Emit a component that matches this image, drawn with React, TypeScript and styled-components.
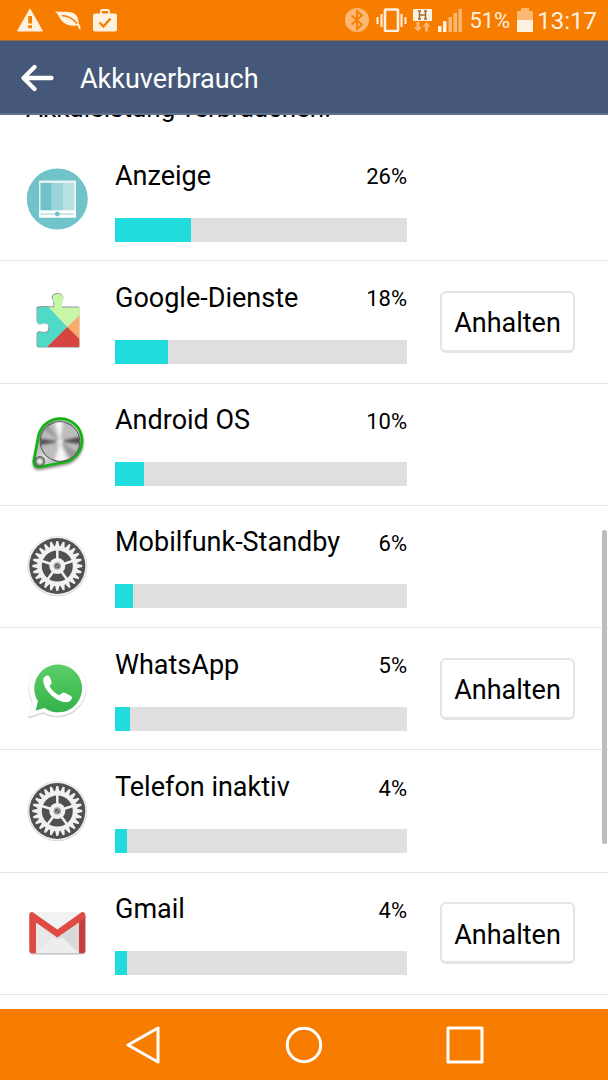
import React from "react";
import styled, { createGlobalStyle } from "styled-components";

const GlobalStyle = createGlobalStyle`
  *, *::before, *::after { box-sizing: border-box; }
  body {
    margin: 0;
    background: #fff;
    color: #000;
    font-family: Roboto, "Liberation Sans", sans-serif;
  }
`;

const Screen = styled.div`
  display: flex;
  flex-direction: column;
  height: 100vh;
`;

const StatusBar = styled.div`
  flex: none;
  display: flex;
  align-items: center;
  justify-content: space-between;
  height: 41px;
  padding: 0 11px 0 17px;
  background: #f77d00;
  border-bottom: 1px solid #9a6c3c;
  color: #fff1e0;
`;

const StatusGroup = styled.div<{ $gap: number }>`
  display: flex;
  align-items: center;
  gap: ${({ $gap }) => $gap}px;
`;

const StatusText = styled.span<{ $size: number }>`
  padding-top: 2px;
  font-size: ${({ $size }) => $size}px;
  line-height: 28px;
`;

const Header = styled.header`
  flex: none;
  display: flex;
  align-items: center;
  gap: 24px;
  height: 74px;
  padding: 2px 20px 0;
  background: #455879;
  border-bottom: 2px solid #5f6f8c;
  color: #fff;
`;

const BackButton = styled.button`
  display: flex;
  padding: 0;
  border: 0;
  background: none;
  color: inherit;
`;

const Title = styled.h1`
  margin: 0;
  padding-top: 2px;
  font-size: 27px;
  line-height: 32px;
  font-weight: 400;
`;

const ListArea = styled.main`
  position: relative;
  flex: 1;
  min-height: 0;
  display: flex;
  flex-direction: column;
  overflow: hidden;
`;

const Intro = styled.p`
  flex: none;
  display: flex;
  align-items: flex-end;
  height: 24px;
  margin: 0;
  padding: 0 26px 15px;
  font-size: 26px;
  line-height: 32px;
`;

const UsageList = styled.ul`
  flex: 1;
  display: flex;
  flex-direction: column;
  margin: 0;
  padding: 0 0 14px;
  list-style: none;
`;

const Row = styled.li`
  flex: 1 0 auto;
  display: flex;
  align-items: center;
  min-height: 122px;
  padding-left: 25px;
  border-bottom: 1px solid #e6e6e6;
`;

const AppIcon = styled.svg`
  flex: none;
  width: 64px;
  height: 64px;
`;

const Usage = styled.div`
  flex: 1;
  margin-left: 26px;
  padding-top: 2px;
`;

const UsageHead = styled.div`
  display: flex;
  align-items: center;
  justify-content: space-between;
  height: 32px;
  margin-bottom: 26px;
  line-height: 32px;
`;

const AppName = styled.span`
  font-size: 27px;
`;

const Percent = styled.span`
  padding-top: 3px;
  font-size: 22px;
`;

const Track = styled.div`
  height: 24px;
  background: #dfdfdf;
`;

const Fill = styled.div`
  height: 100%;
  background: #20dcdc;
`;

const Action = styled.div`
  flex: none;
  width: 201px;
  padding: 0 33px;
`;

const StopButton = styled.button`
  width: 100%;
  height: 62px;
  padding: 4px 0 0;
  border: 2px solid #e2e5e5;
  border-bottom-width: 3px;
  border-radius: 6px;
  background: #fff;
  color: #000;
  font-family: inherit;
  font-size: 27px;
  line-height: 32px;
`;

const ScrollThumb = styled.div`
  position: absolute;
  top: 46.4%;
  right: 1px;
  width: 5px;
  height: 35.1%;
  border-radius: 2px;
  background: #bcbebe;
`;

const NavBar = styled.nav`
  flex: none;
  display: grid;
  grid-template-columns: repeat(3, 1fr);
  height: 71px;
  padding: 0 63px;
  background: #f77d00;
`;

const NavButton = styled.button`
  display: flex;
  align-items: center;
  justify-content: center;
  padding: 0;
  border: 0;
  background: none;
`;

const FAINT = "#fcb873";

const WarningIcon = () => (
  <svg width="26" height="24" viewBox="0 0 26 24" aria-hidden="true">
    <path d="M13 1 25.5 23H.5z" fill="#fff1e0" stroke="#fff1e0" strokeLinejoin="round" />
    <path d="M11.2 8h3.800v7.500h-3.800zM11.2 17.300h3.800v3h-3.800z" fill="#f77d00" />
  </svg>
);

const LeafIcon = () => (
  <svg width="26" height="24" viewBox="0 0 26 24" aria-hidden="true">
    <path
      d="M0 3C5 5 11 2.500 17 4.500 22 6.500 23.800 10.500 23.500 15c1.200 2 1.800 3.500 2.200 6.500L24 21c-.5-1.800-1-2.600-2-3.800C17 18.500 12 17.500 8 14 4 10.500 4 7 0 3z"
      fill="#fff1e0"
    />
    <path d="M7 7.500C13 8 18 10.500 22 15.500" fill="none" stroke="#f77d00" strokeWidth="1.300" />
  </svg>
);

const BriefcaseIcon = () => (
  <svg width="24" height="24" viewBox="0 0 24 24" aria-hidden="true">
    <path d="M8 7V3.500Q8 2 9.500 2h5Q16 2 16 3.500V7" fill="none" stroke="#fff1e0" strokeWidth="2" />
    <rect y="5.500" width="24" height="18" rx="2" fill="#fff1e0" />
    <path d="m6.500 14.500 4 4 7-8" fill="none" stroke="#f77d00" strokeWidth="2.300" />
  </svg>
);

const BluetoothIcon = () => (
  <svg width="24" height="24" viewBox="0 0 24 24" aria-hidden="true">
    <circle cx="12" cy="12" r="12" fill={FAINT} />
    <path d="m6.500 7.500 10.500 9L12 21V3l5 4.500-10.500 9" fill="none" stroke="#f77d00" strokeWidth="1.800" />
  </svg>
);

const VibrateIcon = () => (
  <svg width="31" height="24" viewBox="0 0 31 24" aria-hidden="true">
    <g fill="none" stroke="#fff1e0">
      <rect x="9" y="1.500" width="13" height="21.500" rx="1" strokeWidth="2.600" />
      <path d="M5.500 6v13M25.500 6v13M1.500 9v7M29.500 9v7" strokeWidth="2" />
    </g>
  </svg>
);

const DataIcon = () => (
  <svg width="19" height="24" viewBox="0 0 19 24" aria-hidden="true">
    <rect y="1" width="19" height="12" rx="1" fill="#fff1e0" />
    <path d="M6.500 3v8M12.500 3v8M6.500 7h6M5 3h3M11 3h3M5 11h3M11 11h3" stroke="#9b6a3a" strokeWidth="1.500" />
    <path d="M3.500 14h3v5H9l-4 4.500L1 19h2.500zM12 23.500h3v-5h2.500l-4-4.500-4 4.500H12z" fill={FAINT} />
  </svg>
);

const SignalIcon = () => (
  <svg width="24" height="24" viewBox="0 0 24 24" aria-hidden="true">
    <path d="M0 18h3.500v6H0zM5 13h3.500v11H5z" fill="#fff1e0" />
    <path d="M10.500 9H14v15h-3.500zM15.500 5H19v19h-3.500zM20.500 1H24v23h-3.500z" fill={FAINT} />
  </svg>
);

const BatteryIcon = () => (
  <svg width="16" height="24" viewBox="0 0 16 24" aria-hidden="true">
    <path d="M4 0h8v3h4v9H0V3h4z" fill={FAINT} />
    <rect y="12" width="16" height="12" fill="#fff1e0" />
  </svg>
);

const ArrowIcon = () => (
  <svg width="36" height="28" viewBox="0 0 36 28" aria-hidden="true">
    <path
      d="M14.500 3 3.500 14l11 11M4 14h27.500"
      fill="none"
      stroke="currentColor"
      strokeWidth="4.300"
      strokeLinecap="round"
      strokeLinejoin="round"
    />
  </svg>
);

const DisplayIcon = () => (
  <AppIcon viewBox="0 0 64 64" aria-hidden="true">
    <circle cx="32.300" cy="31" r="30.500" fill="#6fc3c9" />
    <rect x="14" y="12.500" width="37" height="37" fill="#e6f1f3" />
    <rect x="15.500" y="15" width="11.300" height="27.500" fill="#6fc3c9" />
    <rect x="26.800" y="15" width="11.200" height="27.500" fill="#99d4d8" />
    <rect x="38" y="15" width="11" height="27.500" fill="#b9e1e4" />
    <rect x="14" y="42.500" width="37" height="7" fill="#fff" />
    <path d="M15.500 46H49" stroke="#b9e1e4" strokeWidth="1.300" />
    <circle cx="32.300" cy="46" r="2.400" fill="#6fc3c9" />
  </AppIcon>
);

const PUZZLE =
  "M12.500 17.500Q20 16.500 29.300 17.500V11.500Q27.500 10 27.700 7 28.500 4 33 4T38.300 7Q38.500 10 37 11.500V17.500H54.300V57H12.500V43.500Q14 41.500 16 42.500 24.300 44.500 24.300 38T16 33.500Q14 34.500 12.500 32.500z";

const PuzzleIcon = () => (
  <AppIcon viewBox="0 0 64 64" aria-hidden="true">
    <defs>
      <clipPath id="puzzle">
        <path d={PUZZLE} />
      </clipPath>
    </defs>
    <path d={PUZZLE} fill="#8b9996" stroke="#8b9996" strokeWidth="1" transform="translate(-.5 -.5)" />
    <path d={PUZZLE} fill="#c4cbc9" transform="translate(0 1)" />
    <g clipPath="url(#puzzle)">
      <path d="M0 0h24v17.500L42.300 37 22 58H0z" fill="#4fdac8" />
      <path d="M24 0v17.500L42.300 37 55 25V0z" fill="#c8f6a9" />
      <path d="M42.300 37 55 25v25z" fill="#fcaa6a" />
      <path d="M42.300 37 55 49.500V58H21z" fill="#d6453f" />
    </g>
  </AppIcon>
);

const KnobIcon = () => (
  <AppIcon viewBox="0 0 64 64" aria-hidden="true">
    <defs>
      <linearGradient id="plate" x1="0" y1="0" x2="1" y2="1">
        <stop offset="0" stopColor="#666" />
        <stop offset=".5" stopColor="#ddd" />
        <stop offset="1" stopColor="#888" />
      </linearGradient>
      <radialGradient id="stud">
        <stop offset="0" stopColor="#fff" />
        <stop offset=".45" stopColor="#c8c8c8" />
        <stop offset="1" stopColor="#4a4a4a" />
      </radialGradient>
      <clipPath id="disc">
        <circle cx="35" cy="29.500" r="19.300" />
      </clipPath>
      <filter id="soft" x="-20%" y="-20%" width="140%" height="140%">
        <feGaussianBlur stdDeviation="1.600" />
      </filter>
    </defs>
    <path
      d="M8 50 13 23A23 23 0 1 1 40.500 51L14.500 56Q8 56.500 8 50z"
      fill="#333"
      opacity=".6"
      filter="url(#soft)"
      transform="translate(0 2)"
    />
    <path
      d="M8.800 49 13.500 24A22 22 0 1 1 40 50L15 54.800Q8.500 55.500 8.800 49z"
      fill="url(#plate)"
      stroke="#12b512"
      strokeWidth="2.800"
    />
    <circle cx="35" cy="29.500" r="20.300" fill="#555" />
    <g clipPath="url(#disc)">
      <rect x="14" y="9" width="42" height="42" fill="#bdbdbd" />
      <g filter="url(#soft)">
        <path d="M35 29.500 10 26v8zM35 29.500l25-6v9z" fill="#4c4c4c" />
        <path d="M35 29.500 28 5h11zM35 29.500l-7 25h18z" fill="#f6f6f6" />
        <path d="M35 29.500 14 14l6-6zM35 29.500l21 13-8 8z" fill="#9a9a9a" />
      </g>
      <circle cx="35" cy="29.500" r="3" fill="#eee" filter="url(#soft)" />
    </g>
    <circle cx="14.800" cy="49.300" r="5.200" fill="url(#stud)" />
  </AppIcon>
);

const TEETH = 24;
const gearOutline = Array.from({ length: TEETH }, (_, i) => {
  const step = (2 * Math.PI) / TEETH;
  const middle = i * step - Math.PI / 2;
  return [
    [-0.42, 20],
    [-0.14, 25],
    [0.14, 25],
    [0.42, 20],
  ]
    .map(([turn, r]) => {
      const a = middle + turn * step;
      return `${(32.3 + r * Math.cos(a)).toFixed(2)},${(32 + r * Math.sin(a)).toFixed(2)}`;
    })
    .join(" ");
}).join(" ");

const GearIcon = () => (
  <AppIcon viewBox="0 0 64 64" aria-hidden="true">
    <circle cx="32.300" cy="32.300" r="30" fill="#d9d9d9" />
    <circle cx="32.300" cy="32" r="29.300" fill="#f0f0f0" />
    <circle cx="32.300" cy="32" r="28" fill="#505050" />
    <polygon points={gearOutline} fill="#f1f1f1" />
    <circle cx="32.300" cy="32" r="15.500" fill="#505050" />
    {[0, 72, 144, 216, 288].map((angle) => (
      <path
        key={angle}
        d="M32.300 32V15"
        stroke="#f1f1f1"
        strokeWidth="2.500"
        transform={`rotate(${angle} 32.300 32)`}
      />
    ))}
    <circle cx="32.300" cy="32" r="8" fill="#f1f1f1" />
    <circle cx="32.300" cy="32" r="3.800" fill="#a9a9a9" />
    <circle cx="32.300" cy="32" r="2.300" fill="#505050" />
    <path d="m31.500 33.500 1.800-3" stroke="#ccc" />
  </AppIcon>
);

const ChatIcon = () => (
  <AppIcon viewBox="0 0 64 64" aria-hidden="true">
    <defs>
      <linearGradient id="chat" x1="0" y1="0" x2="0" y2="1">
        <stop offset="0" stopColor="#5bcf68" />
        <stop offset="1" stopColor="#35b24a" />
      </linearGradient>
    </defs>
    <path
      d="M3.500 60.500 7.300 44.500A28.600 28.600 0 1 1 18.500 55.800z"
      fill="#c9c9c9"
      stroke="#dcdcdc"
      strokeLinejoin="round"
      transform="translate(0 .5)"
    />
    <path d="M3.500 60 7.300 44A28.600 28.600 0 1 1 18.500 55.300z" fill="#fdfdfd" />
    <path d="M10.700 53.500 13 44.200A23.900 23.900 0 1 1 19.500 51z" fill="url(#chat)" />
    <path
      d="M18.300 22Q19.500 18.500 22.500 18.500 24.500 18.500 25 20.500L26.700 25Q27 26.500 24.500 29 28 35.500 34.500 38.300 37.500 35.500 38.500 35.500 40 35.500 46 39 47.500 39.500 46.800 41.500 45.500 45 41 45.300 34 45.300 26 38 17.500 29.500 18.300 22z"
      fill="#fff"
    />
  </AppIcon>
);

const MailIcon = () => (
  <AppIcon viewBox="0 0 64 64" aria-hidden="true">
    <rect x="4.500" y="12.500" width="56" height="41" rx="3" fill="#bdbdbd" />
    <rect x="4.300" y="11" width="56" height="41.300" rx="3" fill="#e7e8e8" />
    <path d="M8 11h49L32.300 29z" fill="#f1f3f2" />
    <path d="M11 22 32.300 37.500 54 22v30z" fill="#d9d9d9" />
    <path d="M11 51 28 36l4.300 3L37 36l17 16H11z" fill="#ededed" />
    <path d="M54 20v32.300h3.300q3 0 3-3V15z" fill="#c73c3f" />
    <path
      d="M7.300 11Q4.300 11 4.300 14v35.300q0 3 3 3H11V21.500L32.300 36.500 54 21.500 60.300 17v-3q-.3-3-3.300-3L32.300 28.500z"
      fill="#dd4b44"
    />
  </AppIcon>
);

type Entry = { name: string; percent: number; Icon: React.FC; stoppable?: boolean };

const entries: Entry[] = [
  { name: "Anzeige", percent: 26, Icon: DisplayIcon },
  { name: "Google-Dienste", percent: 18, Icon: PuzzleIcon, stoppable: true },
  { name: "Android OS", percent: 10, Icon: KnobIcon },
  { name: "Mobilfunk-Standby", percent: 6, Icon: GearIcon },
  { name: "WhatsApp", percent: 5, Icon: ChatIcon, stoppable: true },
  { name: "Telefon inaktiv", percent: 4, Icon: GearIcon },
  { name: "Gmail", percent: 4, Icon: MailIcon, stoppable: true },
];

const UsageRow = ({ name, percent, Icon, stoppable }: Entry) => (
  <Row>
    <Icon />
    <Usage>
      <UsageHead>
        <AppName>{name}</AppName>
        <Percent>{percent}%</Percent>
      </UsageHead>
      <Track role="progressbar" aria-label={name} aria-valuenow={percent}>
        <Fill style={{ width: `${percent}%` }} />
      </Track>
    </Usage>
    <Action>{stoppable && <StopButton type="button">Anhalten</StopButton>}</Action>
  </Row>
);

export default function App() {
  return (
    <Screen>
      <GlobalStyle />
      <StatusBar>
        <StatusGroup $gap={12}>
          <WarningIcon />
          <LeafIcon />
          <BriefcaseIcon />
        </StatusGroup>
        <StatusGroup $gap={7}>
          <BluetoothIcon />
          <StatusGroup $gap={6}>
            <VibrateIcon />
            <DataIcon />
            <SignalIcon />
          </StatusGroup>
          <StatusText $size={22}>51%</StatusText>
          <StatusGroup $gap={4}>
            <BatteryIcon />
            <StatusText $size={24}>13:17</StatusText>
          </StatusGroup>
        </StatusGroup>
      </StatusBar>
      <Header>
        <BackButton type="button" aria-label="Zurück">
          <ArrowIcon />
        </BackButton>
        <Title>Akkuverbrauch</Title>
      </Header>
      <ListArea>
        <Intro>Akkuleistung verbrauchen.</Intro>
        <UsageList>
          {entries.map((entry) => (
            <UsageRow key={entry.name} {...entry} />
          ))}
        </UsageList>
        <ScrollThumb />
      </ListArea>
      <NavBar>
        <NavButton type="button" aria-label="Zurück">
          <svg width="38" height="38" viewBox="0 0 38 38" aria-hidden="true">
            <path d="M34 2v34L4 19z" fill="none" stroke="#fff" strokeWidth="3" strokeLinejoin="round" />
          </svg>
        </NavButton>
        <NavButton type="button" aria-label="Startbildschirm">
          <svg width="38" height="38" viewBox="0 0 38 38" aria-hidden="true">
            <circle cx="19" cy="19" r="16.700" fill="none" stroke="#fff" strokeWidth="3" />
          </svg>
        </NavButton>
        <NavButton type="button" aria-label="Letzte Apps">
          <svg width="38" height="38" viewBox="0 0 38 38" aria-hidden="true">
            <rect x="2" y="2" width="34" height="34" fill="none" stroke="#fff" strokeWidth="3" strokeLinejoin="round" />
          </svg>
        </NavButton>
      </NavBar>
    </Screen>
  );
}
